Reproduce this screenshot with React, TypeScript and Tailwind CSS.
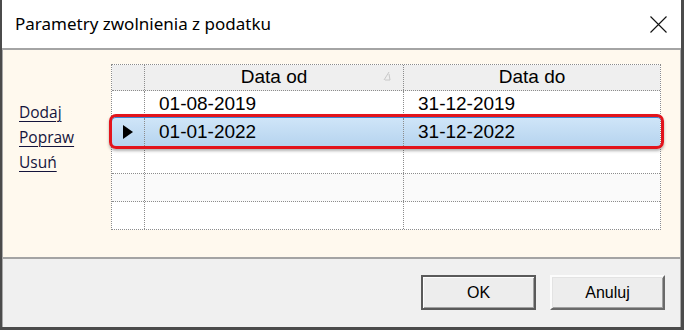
// Dialog "Parametry zwolnienia z podatku" – list of tax exemption periods
const rows = [
  { from: "01-08-2019", to: "31-12-2019", h: "h-[27px]", selected: false, alt: false },
  { from: "01-01-2022", to: "31-12-2022", h: "h-[29px]", selected: true, alt: true },
  { from: "", to: "", h: "h-[27px]", selected: false, alt: false },
  { from: "", to: "", h: "h-[28px]", selected: false, alt: true },
  { from: "", to: "", h: "h-[27px]", selected: false, alt: false, last: true },
];

const dot = "border-dotted border-[#8c8c8c]";

function LinkItem({ label }: { label: string }) {
  return (
    <a className="block h-[25px] leading-[25px] text-[15.5px] text-[#14143c] underline underline-offset-[3px] decoration-1">
      {label}
    </a>
  );
}

function Grid() {
  return (
    <div className={`relative w-[550px] border ${dot} bg-white`}>
      {/* header row */}
      <div className={`flex h-[26px] border-b ${dot} bg-[#efefef]`}>
        <div className={`w-[33px] border-r ${dot}`} />
        <div className={`relative flex w-[259px] items-center justify-center border-r ${dot} text-[19px]`}>
          Data od
          <svg className="absolute right-[12px] top-[6px]" width="8" height="10" viewBox="0 0 8 10">
            <path d="M1 9 L6 1 M2 9 L7 9 L6 3" stroke="#c8c8c8" strokeWidth="1" fill="none" />
          </svg>
        </div>
        <div className="flex flex-1 items-center justify-center text-[19px]">Data do</div>
      </div>
      {/* data rows */}
      {rows.map((r, i) => (
        <div
          key={i}
          className={`flex ${r.h} ${r.last ? "" : `border-b ${dot}`} ${
            r.selected
              ? "bg-gradient-to-b from-[#cfe5f8] to-[#b6d4ef]"
              : r.alt
              ? "bg-[#fafafa]"
              : "bg-white"
          }`}
        >
          <div className={`flex w-[33px] items-center justify-center border-r ${dot}`}>
            {r.selected && (
              <svg width="10" height="14" viewBox="0 0 10 14">
                <path d="M0 0 L10 7 L0 14 Z" fill="#000" />
              </svg>
            )}
          </div>
          <div className={`flex w-[259px] items-center border-r ${dot} pl-[14px] text-[19px]`}>{r.from}</div>
          <div className="flex flex-1 items-center pl-[14px] text-[19px]">{r.to}</div>
        </div>
      ))}
      {/* red highlight annotation over selected row */}
      <div className="pointer-events-none absolute left-[-3px] top-[49px] h-[35px] w-[555px] rounded-[7px] border-[3px] border-[#e3141c] shadow-[0_2px_3px_rgba(0,0,0,0.3),inset_0_1px_0_#3a84d4]" />
    </div>
  );
}

export default function App() {
  return (
    <div className="flex h-[330px] w-[684px] flex-col border-b-[3px] border-l-2 border-r-[3px] border-[#4b4b4b] bg-white font-['Liberation_Sans',Arial,sans-serif] text-black">
      {/* title bar */}
      <div className="flex h-[48px] items-center justify-between pl-[13px] pr-[14px]">
        <span className="font-['Noto_Sans',sans-serif] text-[17px] text-black">Parametry zwolnienia z podatku</span>
        <svg width="17" height="17" viewBox="0 0 17 17">
          <path d="M0.5 0.5 L16.5 16.5 M16.5 0.5 L0.5 16.5" stroke="#111" strokeWidth="1.1" />
        </svg>
      </div>
      <div className="flex flex-1 flex-col border-x border-[#a8a8a8]">
        {/* content panel */}
        <div className="flex h-[211px] items-start border-y-2 border-[#a4a4a4] bg-[#fff9ee] pl-[16px] pt-[14px]">
          <div className="w-[92px] pt-[36px] font-['Open_Sans',sans-serif]">
            <LinkItem label="Dodaj" />
            <LinkItem label="Popraw" />
            <LinkItem label="Usuń" />
          </div>
          <Grid />
        </div>
        {/* footer with buttons */}
        <div className="flex flex-1 items-start justify-end gap-[14px] bg-[#f0f0f0] pr-[15px] pt-[16px]">
          <button className="flex h-[35px] w-[115px] items-center justify-center border-2 border-[#5a5a5a] bg-[#ededed] text-[16px] shadow-[inset_1px_1px_0_#fdfdfd,inset_-1px_-1px_0_#a0a0a0]">
            OK
          </button>
          <button className="flex h-[35px] w-[115px] items-center justify-center border-2 border-b-[#6a6a6a] border-l-[#fcfcfc] border-r-[#6a6a6a] border-t-[#fcfcfc] bg-[#ededed] text-[16px] shadow-[inset_1px_1px_0_#e3e3e3,inset_-1px_-1px_0_#a0a0a0]">
            Anuluj
          </button>
        </div>
      </div>
    </div>
  );
}
